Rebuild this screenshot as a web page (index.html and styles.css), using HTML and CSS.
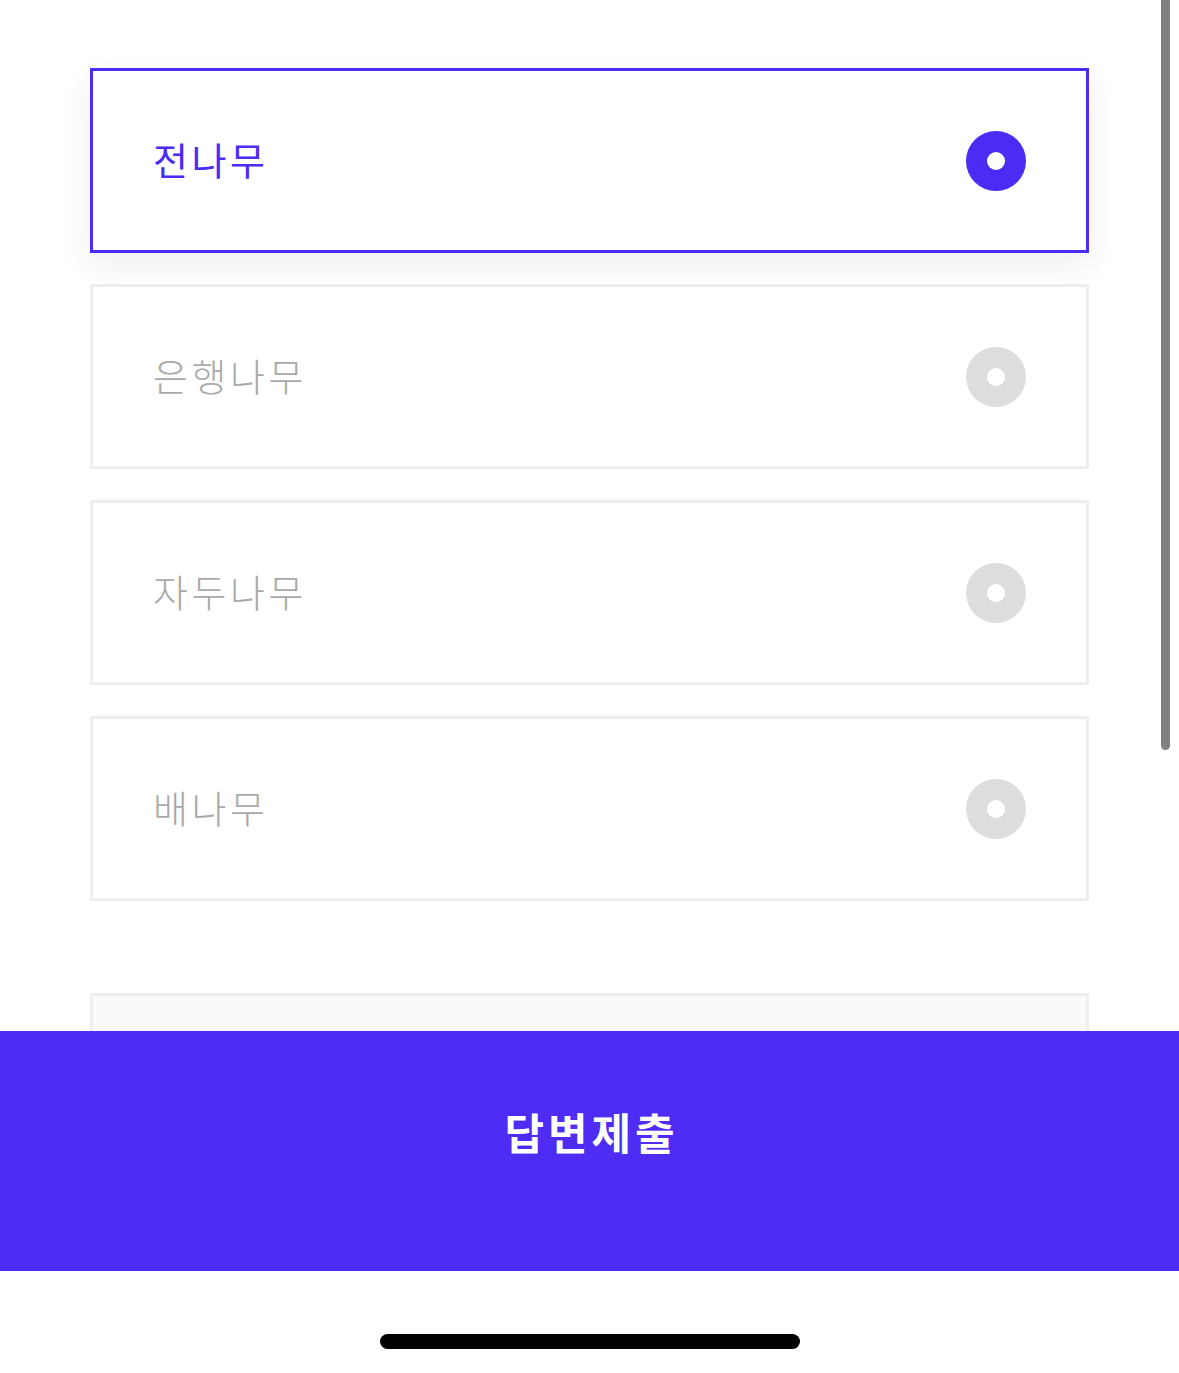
FILE: index.html
```
<!DOCTYPE html>
<html lang="ko">
<head>
    <meta charset="utf-8">
    <link rel="stylesheet" href="styles.css">
</head>
<body>
    <div class="tela">
        <div class="rolagem">
            <ul class="opcoes">
                <li class="opcao selecionada">
                    <span class="rotulo">전나무</span>
                    <span class="radio"></span>
                </li>
                <li class="opcao">
                    <span class="rotulo">은행나무</span>
                    <span class="radio"></span>
                </li>
                <li class="opcao">
                    <span class="rotulo">자두나무</span>
                    <span class="radio"></span>
                </li>
                <li class="opcao">
                    <span class="rotulo">배나무</span>
                    <span class="radio"></span>
                </li>
            </ul>
            <div class="proximo"></div>
            <div class="barra-rolagem"></div>
        </div>

        <button type="button" class="enviar">답변제출</button>

        <div class="rodape">
            <div class="indicador"></div>
        </div>
    </div>
</body>
</html>
```

FILE: styles.css
```
body {
    margin: 0;
    padding: 0;
    background-color: #fff;
    font-family: "Noto Sans CJK KR", "Noto Sans", sans-serif;
}
.tela {
    width: 1179px;
    height: 1373px;
    display: flex;
    flex-direction: column;
    overflow: hidden;
}
.rolagem {
    position: relative;
    height: 1031px;
    overflow: hidden;
    padding: 68px 90px 0;
    box-sizing: border-box;
}
.opcoes {
    list-style: none;
    margin: 0;
    padding: 0;
    width: 999px;
    display: flex;
    flex-direction: column;
    gap: 31px;
}
.opcao {
    height: 185px;
    box-sizing: border-box;
    border: 3px solid #eeeeee;
    background-color: #fff;
    display: flex;
    align-items: center;
    justify-content: space-between;
    padding: 0 60px 3px;
}
.opcao.selecionada {
    border-color: #4b2cf4;
    box-shadow: 0 12px 32px rgba(0, 0, 0, 0.07);
}
.rotulo {
    font-size: 38px;
    font-weight: 300;
    color: #a9a9a9;
    line-height: 1;
    letter-spacing: 3.5px;
}
.selecionada .rotulo {
    color: #4b2cf4;
    font-weight: 400;
}
.radio {
    width: 60px;
    height: 60px;
    margin-top: 3px;
    border-radius: 50%;
    background-color: #dddddd;
    display: flex;
    align-items: center;
    justify-content: center;
}
.radio::after {
    content: "";
    width: 18px;
    height: 18px;
    border-radius: 50%;
    background-color: #fff;
}
.selecionada .radio {
    background-color: #4b2cf4;
}
.proximo {
    width: 999px;
    height: 120px;
    margin-top: 92px;
    box-sizing: border-box;
    border: 3px solid #eeeeee;
    background-color: #f9f9f9;
}
.barra-rolagem {
    position: absolute;
    top: 0;
    left: 1161px;
    width: 9px;
    height: 750px;
    background-color: #808080;
    border-radius: 0 0 5px 5px;
}
.enviar {
    height: 240px;
    flex-shrink: 0;
    border: none;
    margin: 0;
    background-color: #4e2cf4;
    color: #fff;
    font-family: "Noto Sans CJK KR", "Noto Sans", sans-serif;
    font-size: 43px;
    font-weight: 700;
    letter-spacing: 4px;
    padding: 0 0 40px 4px;
    cursor: pointer;
}
.rodape {
    flex: 1;
    display: flex;
    justify-content: center;
    padding-top: 63px;
}
.indicador {
    width: 420px;
    height: 15px;
    border-radius: 8px;
    background-color: #000;
}
```
